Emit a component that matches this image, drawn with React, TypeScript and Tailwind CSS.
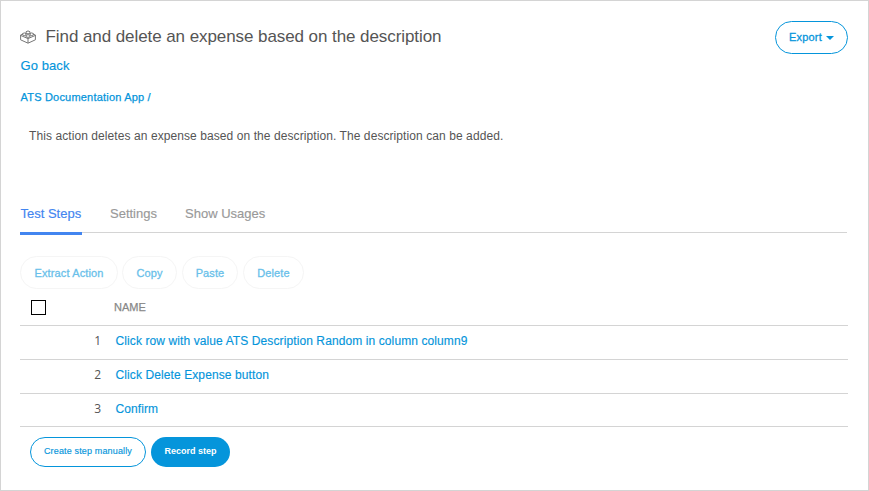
import React from "react";

const tabs = [
  { label: "Settings", width: "w-[47px]" },
  { label: "Show Usages", width: "w-[82px]" },
];

const actions = [
  { label: "Extract Action", width: "w-[98px]", margin: "mr-1" },
  { label: "Copy", width: "w-[55px]", margin: "mr-[5px]" },
  { label: "Paste", width: "w-[56px]", margin: "mr-[5px]" },
  { label: "Delete", width: "w-[61px]", margin: "" },
];

const steps = [
  { name: "Click row with value ATS Description Random in column column9", height: "h-[34px]" },
  { name: "Click Delete Expense button", height: "h-[34px]" },
  { name: "Confirm", height: "h-[33px]" },
];

function BrickIcon() {
  return (
    <svg width="16" height="14" viewBox="0 0 16 14" fill="none" stroke="#777" strokeWidth="1" strokeLinejoin="round">
      <path d="M3 4 L0.6 5 V9.8 L8 13.2 L15.4 9.8 V5 L13 4" />
      <path d="M0.6 5.4 L8 8.6 L15.4 5.4 M8 8.6 V13" />
      <path d="M6 3.2 V1.8 Q8 0 10 1.8 V3.2 Q8 4.6 6 3.2" />
      <path d="M2.6 5 V3.6 Q4.3 2.2 6 3.6 V5 Q4.3 6.2 2.6 5" />
      <path d="M10 5 V3.6 Q11.7 2.2 13.4 3.6 V5 Q11.7 6.2 10 5" />
      <path d="M6 6.8 V5.4 Q8 3.8 10 5.4 V6.8 Q8 8 6 6.8" />
    </svg>
  );
}

export default function App() {
  return (
    <div className="flex h-[491px] w-[869px] flex-col border border-[#d4d4d4] bg-white pr-5 pl-[19px] font-['Liberation_Sans',Arial,sans-serif] text-[#555]">
      <header className="flex h-[80px] items-start justify-between pt-5">
        <div className="flex flex-col pt-px">
          <h1 className="flex h-[30px] items-center text-[17px] tracking-[-0.075px]">
            <span className="w-[25.5px]"><BrickIcon /></span>
            Find and delete an expense based on the description
          </h1>
          <a className="flex h-[28px] items-center pl-[0.5px] text-[13px] tracking-[0.08px] text-[#0595db] [-webkit-text-stroke:0.15px]">Go back</a>
        </div>
        <button className="flex h-[33px] w-[73px] items-center justify-center gap-1 rounded-full border border-[#0595db] text-[11px] tracking-[0.2px] text-[#0595db] [-webkit-text-stroke:0.3px]">
          Export
          <svg width="8" height="4" viewBox="0 0 8 4"><path d="M0 0H8L4 4Z" fill="#0595db" /></svg>
        </button>
      </header>

      <nav className="flex h-[32px] items-center pl-[0.5px] text-[11px] tracking-[0.2px] text-[#0595db] [-webkit-text-stroke:0.25px]">ATS Documentation App /</nav>
      <p className="flex h-[44px] items-center pt-[2px] pl-[9px] text-[12px] tracking-[0.08px]">
        This action deletes an expense based on the description. The description can be added.
      </p>

      <div className="mt-[38px] flex h-[40px] gap-7 text-[13px] whitespace-nowrap text-[#999]">
        <span className="h-[40px] w-[62px] border-b-[3px] border-[#4285f0] pt-[9px] pl-[0.5px] text-[#4285f0] [-webkit-text-stroke:0.15px]">Test Steps</span>
        {tabs.map((tab) => (
          <span key={tab.label} className={`pt-[9px] [-webkit-text-stroke:0.15px] ${tab.width}`}>{tab.label}</span>
        ))}
      </div>
      <div className="-mt-[3px] mr-px ml-[62px] h-px shrink-0 bg-[#d4d4d4]" />

      <div className="mt-[23px] flex">
        {actions.map((action) => (
          <button key={action.label} className={`h-[33px] rounded-full border border-[#f5f5f5] pt-[2px] text-[11px] tracking-[0.12px] whitespace-nowrap text-[#69bfea] [-webkit-text-stroke:0.3px] ${action.width} ${action.margin}`}>
            {action.label}
          </button>
        ))}
      </div>

      <div className="flex h-[37px] items-center border-b border-[#d4d4d4] pl-[11px]">
        <span className="h-[15px] w-[15px] border border-black" />
        <span className="ml-[68px] text-[11px] text-[#888] [-webkit-text-stroke:0.25px]">NAME</span>
      </div>
      {steps.map((step, i) => (
        <div key={step.name} className={`flex items-start border-b border-[#d4d4d4] pt-[6px] text-[12px] leading-[18px] ${step.height}`}>
          <span className="w-[81px] text-right font-['Open_Sans',sans-serif]">{i + 1}</span>
          <a className="ml-[14.5px] tracking-[0.1px] text-[#0595db] [-webkit-text-stroke:0.15px]">{step.name}</a>
        </div>
      ))}

      <div className="mt-[10px] ml-[10px] flex gap-[5px] text-[9px]">
        <button className="h-[30px] w-[116px] rounded-full border border-[#0595db] tracking-[0.15px] text-[#0595db] [-webkit-text-stroke:0.15px]">Create step manually</button>
        <button className="h-[30px] w-[79px] rounded-full bg-[#0595db] font-bold text-white">Record step</button>
      </div>
    </div>
  );
}
